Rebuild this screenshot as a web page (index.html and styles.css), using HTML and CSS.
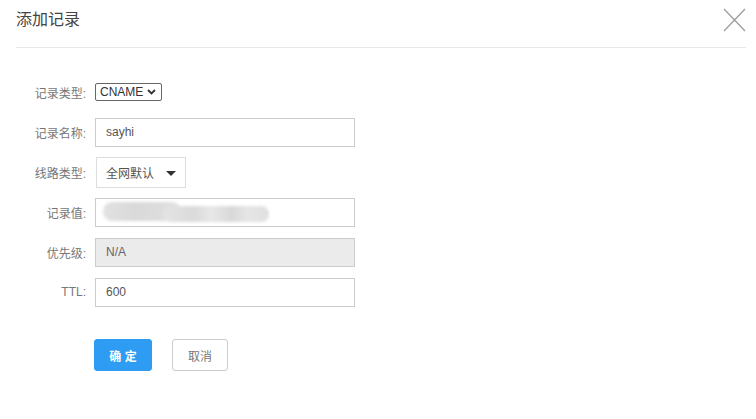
FILE: index.html
```html
<!DOCTYPE html>
<html lang="zh">
<head>
<meta charset="utf-8">
<title>添加记录</title>
<link rel="stylesheet" href="styles.css">
</head>
<body>
<div class="dialog">
  <div class="header">
    <div class="title">添加记录</div>
    <svg class="close" width="23" height="24" viewBox="0 0 23 24"><path d="M1 1 L22 23 M22 1 L1 23" stroke="#a0a0a0" stroke-width="1.4" fill="none"/></svg>
  </div>
  <div class="form">
    <div class="row">
      <div class="label">记录类型:</div>
      <div class="select-native">
        <span>CNAME</span>
        <svg width="9" height="6" viewBox="0 0 9 6"><path d="M1 1 L4.5 4.5 L8 1" stroke="#333" stroke-width="1.8" fill="none"/></svg>
      </div>
    </div>
    <div class="row">
      <div class="label">记录名称:</div>
      <div class="input">sayhi</div>
    </div>
    <div class="row">
      <div class="label">线路类型:</div>
      <div class="dropdown">
        <span>全网默认</span>
        <span class="caret"></span>
      </div>
    </div>
    <div class="row">
      <div class="label">记录值:</div>
      <div class="input">
        <div class="blur">
          <div class="blob b1"></div>
          <div class="blob b2"></div>
        </div>
      </div>
    </div>
    <div class="row">
      <div class="label">优先级:</div>
      <div class="input disabled">N/A</div>
    </div>
    <div class="row">
      <div class="label">TTL:</div>
      <div class="input">600</div>
    </div>
    <div class="actions">
      <button class="btn primary">确 定</button>
      <button class="btn">取消</button>
    </div>
  </div>
</div>
</body>
</html>
```

FILE: styles.css
```css
html, body {
  margin: 0;
  padding: 0;
  background: #fff;
  font-family: "Liberation Sans", Arial, "Noto Sans CJK SC", sans-serif;
  color: #555;
}
.dialog {
  width: 756px;
  height: 419px;
}
.header {
  margin: 0 10px 0 16px;
  height: 47px;
  border-bottom: 1px solid #e8e8e8;
  display: flex;
  justify-content: space-between;
  align-items: flex-start;
}
.title {
  font-size: 16px;
  color: #444;
  line-height: 20px;
  padding-top: 10px;
}
.close {
  margin-top: 8px;
}
.form {
  padding-top: 24px;
}
.row {
  height: 40px;
  display: flex;
  align-items: center;
}
.label {
  width: 86px;
  text-align: right;
  font-size: 12px;
  color: #777;
  margin-right: 9px;
}
.select-native {
  box-sizing: border-box;
  height: 18px;
  width: 67px;
  border: 1px solid #666;
  border-radius: 2px;
  display: flex;
  align-items: center;
  padding: 0 3px 0 4px;
  gap: 4px;
  font-size: 12px;
  color: #333;
}
.input {
  box-sizing: border-box;
  width: 260px;
  height: 29px;
  border: 1px solid #ccc;
  font-size: 12px;
  line-height: 27px;
  padding-left: 10px;
  color: #555;
  position: relative;
  overflow: hidden;
}
.input.disabled {
  background: #ebebeb;
  color: #666;
}
.dropdown {
  box-sizing: border-box;
  width: 90px;
  height: 31px;
  border: 1px solid #ddd;
  display: flex;
  align-items: center;
  padding-left: 9px;
  font-size: 12px;
  color: #555;
  margin-left: 1px;
}
.caret {
  margin-left: 12px;
  width: 0;
  height: 0;
  border-left: 5px solid transparent;
  border-right: 5px solid transparent;
  border-top: 5px solid #333;
  margin-top: 2px;
}
.blur {
  position: absolute;
  left: 7px;
  top: 2px;
  width: 170px;
  height: 22px;
  filter: blur(1.5px);
}
.blob {
  position: absolute;
  border-radius: 9px;
}
.b1 {
  left: 0;
  top: 1px;
  width: 78px;
  height: 19px;
  background: linear-gradient(90deg, #e2e2e2, #d9d9d9 40%, #e0e0e0);
}
.b2 {
  left: 60px;
  top: 5px;
  width: 106px;
  height: 16px;
  background: linear-gradient(90deg, #e4e4e4, #dadada 30%, #e8e8e8 45%, #d8d8d8 65%, #e6e6e6 80%, #dedede);
}
.actions {
  display: flex;
  gap: 20px;
  padding-left: 94px;
  margin-top: 27px;
}
.btn {
  box-sizing: border-box;
  height: 32px;
  width: 56px;
  border: 1px solid #ccc;
  border-radius: 3px;
  background: #fff;
  color: #777;
  font-family: "Liberation Sans", Arial, "Noto Sans CJK SC", sans-serif;
  font-size: 12px;
  padding: 0;
}
.btn.primary {
  width: 58px;
  background: #2d9cf2;
  border-color: #2d9cf2;
  color: #fff;
  font-weight: bold;
}
```
